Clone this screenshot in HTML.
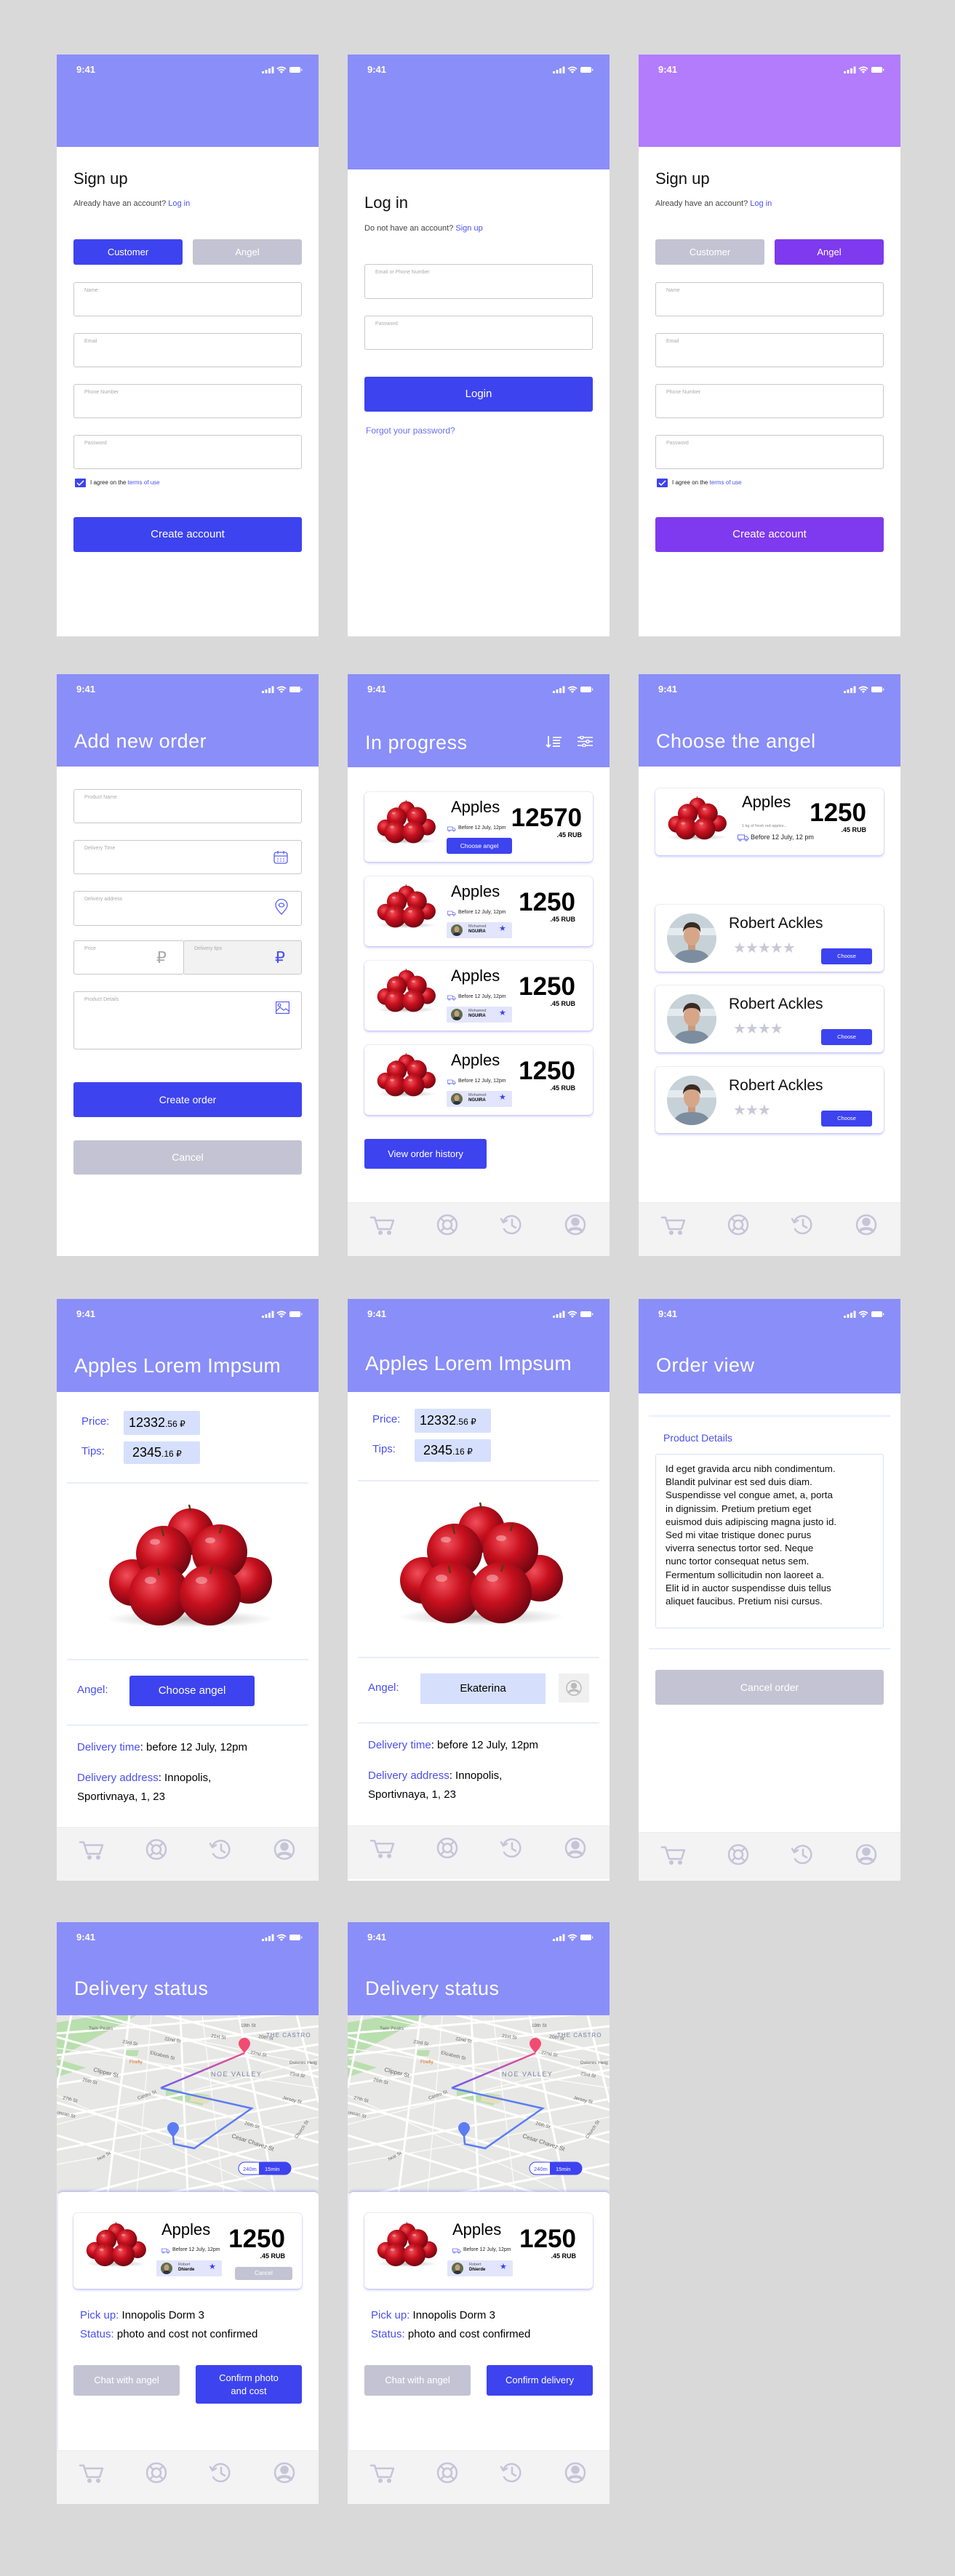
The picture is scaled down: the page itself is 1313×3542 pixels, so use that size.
<!DOCTYPE html>
<html><head><meta charset="utf-8">
<style>
*{margin:0;padding:0;box-sizing:border-box}
body{width:1313px;height:3542px;background:#d9d9d9;position:relative;font-family:"Liberation Sans",sans-serif;overflow:hidden}
.ph{position:absolute;width:360px;height:800px;background:#fff;overflow:hidden}
.hd{position:absolute;left:0;top:0;width:360px;background:#8a8ef8}
.a{position:absolute;white-space:nowrap}
.tm{position:absolute;left:27px;top:13px;color:#fff;font-weight:bold;font-size:13px}
.si{position:absolute;left:282px;top:15px}
.ttl{position:absolute;left:24px;top:77px;color:#fff;font-size:27px;letter-spacing:.5px;white-space:nowrap}
.inp{position:absolute;left:23px;width:314px;height:47px;border:1px solid #c9c9c9;border-radius:3px}
.inp span{position:absolute;left:14px;top:7px;font-size:7px;color:#aaa}
.btn{position:absolute;border-radius:3px;color:#fff;text-align:center;white-space:nowrap}
.pr{background:#3d43ef}.gr{background:#c4c3d3}.pu{background:#7f39ee}
.tb{position:absolute;left:0;top:726px;width:360px;height:74px;background:#f3f3f4;border-top:1px solid #ececec}
.card{position:absolute;left:23px;width:314px;background:#fff;border-radius:6px;box-shadow:0 2px 3px rgba(110,110,240,.35),0 0 0 1px #eeeffc}
.num{position:absolute;font-family:"Liberation Sans Narrow","Liberation Sans",sans-serif;font-weight:bold;color:#000;text-align:right;white-space:nowrap;line-height:1}
.bl{color:#4b4ff0}
.chip{position:absolute;background:#e2e5fb;border-radius:2px}
.dv{position:absolute;left:14px;width:332px;height:2px;background:#e8edfc}
</style></head><body>

<svg width="0" height="0" style="position:absolute">
<defs>
<radialGradient id="ag" cx="0.38" cy="0.35" r="0.7">
<stop offset="0" stop-color="#f0505a"/><stop offset="0.45" stop-color="#c8101e"/><stop offset="1" stop-color="#6a0510"/></radialGradient>
<radialGradient id="sh" cx="0.5" cy="0.5" r="0.5"><stop offset="0" stop-color="#000" stop-opacity=".25"/><stop offset="1" stop-color="#000" stop-opacity="0"/></radialGradient>
<symbol id="ap" viewBox="0 0 240 170">
<ellipse cx="125" cy="158" rx="115" ry="12" fill="url(#sh)"/>
<circle cx="125" cy="38" r="32" fill="url(#ag)"/>
<circle cx="45" cy="108" r="32" fill="url(#ag)"/>
<circle cx="205" cy="105" r="32" fill="url(#ag)"/>
<circle cx="88" cy="68" r="38" fill="url(#ag)"/>
<circle cx="165" cy="66" r="38" fill="url(#ag)"/>
<circle cx="82" cy="125" r="42" fill="url(#ag)"/>
<circle cx="152" cy="125" r="42" fill="url(#ag)"/>
<g stroke="#5a3a10" stroke-width="2.5" fill="none"><path d="M88 44l-3-12M165 40l3-10M82 98l-2-10M152 96l3-10M125 10l-2-9"/></g>
<g fill="#fff" opacity=".35"><ellipse cx="70" cy="105" rx="8" ry="5"/><ellipse cx="140" cy="105" rx="8" ry="5"/><ellipse cx="76" cy="52" rx="7" ry="4"/><ellipse cx="152" cy="50" rx="7" ry="4"/></g>
</symbol>
<symbol id="fc" viewBox="0 0 68 68">
<rect width="68" height="68" fill="#c7d2d8"/><rect x="0" y="20" width="68" height="10" fill="#e4ebee"/>
<path d="M8 68c2-14 12-18 26-18s24 4 26 18z" fill="#7d8da0"/>
<rect x="29" y="38" width="10" height="12" fill="#c99a7c"/>
<ellipse cx="34" cy="30" rx="11" ry="14" fill="#d6a688"/>
<path d="M22 26c0-10 6-14 12-14s13 3 12 14c-2-5-6-7-12-7s-10 2-12 7z" fill="#3a2b22"/>
</symbol>
<symbol id="sm" viewBox="0 0 16 16"><rect width="16" height="16" fill="#5b6e4a"/><ellipse cx="8" cy="7" rx="3.5" ry="4.5" fill="#c99a7c"/><path d="M2 16c1-4 3-5 6-5s5 1 6 5z" fill="#2a3340"/></symbol>
<symbol id="st" viewBox="0 0 56 12"><g fill="#fff"><rect x="0" y="8" width="3" height="3" rx=".5"/><rect x="4.5" y="6" width="3" height="5" rx=".5"/><rect x="9" y="4" width="3" height="7" rx=".5"/><rect x="13.5" y="1.5" width="3" height="9.5" rx=".5"/>
<path d="M27 11l-2.2-2.4a3.2 3.2 0 0 1 4.4 0z"/><path d="M22.6 6.4a6.4 6.4 0 0 1 8.8 0l-1.3 1.3a4.5 4.5 0 0 0-6.2 0z"/><path d="M20.4 4.2a9.5 9.5 0 0 1 13.2 0l-1.3 1.3a7.6 7.6 0 0 0-10.6 0z"/>
<rect x="38" y="2" width="15" height="8" rx="2"/><rect x="54" y="4.5" width="1.3" height="3" rx=".5"/></g></symbol>
<symbol id="tk" viewBox="0 0 16 10"><g fill="none" stroke="#6b6ff5" stroke-width="1"><rect x=".5" y="1" width="9" height="6"/><path d="M9.5 3h3l2.5 2.5V7h-5.5"/><circle cx="3.5" cy="8" r="1.3" fill="#fff"/><circle cx="12" cy="8" r="1.3" fill="#fff"/></g></symbol>
<symbol id="tab" viewBox="0 0 360 74"><g fill="none" stroke="#c6c4d8" stroke-width="2.5" stroke-linecap="round" stroke-linejoin="round">
<path d="M32 20h5l5 16h17l4-12H40"/><circle cx="45" cy="41" r="1.8" fill="#c6c4d8"/><circle cx="57" cy="41" r="1.8" fill="#c6c4d8"/>
<circle cx="137" cy="30" r="13"/><circle cx="137" cy="30" r="6"/><path d="M128 21l5 5M146 21l-5 5M128 39l5-5M146 39l-5-5"/>
<path d="M214 26a12 12 0 1 1 1 10"/><path d="M211 22l3 5 5-3"/><path d="M226 23v8l5 3"/>
<circle cx="313" cy="30" r="13"/><circle cx="313" cy="26" r="4.5" fill="#c6c4d8"/><path d="M304 39c3-5 15-5 18 0" stroke-width="4"/></g></symbol>
</defs></svg>

<!-- ============ ROW 1 ============ -->
<!-- Sign up customer -->
<div class="ph" style="left:78px;top:75px">
<div class="hd" style="height:127px"></div>
<div class="tm">9:41</div><svg class="si" width="56" height="12"><use href="#st"/></svg>
<div class="a" style="left:23px;top:158px;font-size:22px;color:#111">Sign up</div>
<div class="a" style="left:23px;top:199px;font-size:11px;color:#444">Already have an account? <span class="bl">Log in</span></div>
<div class="btn pr" style="left:23px;top:254px;width:150px;height:35px;line-height:35px;font-size:13px">Customer</div>
<div class="btn gr" style="left:187px;top:254px;width:150px;height:35px;line-height:35px;font-size:13px">Angel</div>
<div class="inp" style="top:313px"><span>Name</span></div>
<div class="inp" style="top:383px"><span>Email</span></div>
<div class="inp" style="top:453px"><span>Phone Number</span></div>
<div class="inp" style="top:523px"><span>Password</span></div>
<svg class="a" style="left:25px;top:583px" width="15" height="12"><rect width="15" height="12" rx="1" fill="#3d43ef"/><path d="M3 6l3 3 6-6" stroke="#fff" stroke-width="1.5" fill="none"/></svg>
<div class="a" style="left:46px;top:584px;font-size:8px;color:#222">I agree on the <span class="bl">terms of use</span></div>
<div class="btn pr" style="left:23px;top:636px;width:314px;height:48px;line-height:48px;font-size:15px">Create account</div>
</div>

<!-- Log in -->
<div class="ph" style="left:478px;top:75px">
<div class="hd" style="height:158px"></div>
<div class="tm">9:41</div><svg class="si" width="56" height="12"><use href="#st"/></svg>
<div class="a" style="left:23px;top:191px;font-size:22px;color:#111">Log in</div>
<div class="a" style="left:23px;top:233px;font-size:11px;color:#444">Do not have an account? <span class="bl">Sign up</span></div>
<div class="inp" style="top:288px;height:48px"><span>Email or Phone Number</span></div>
<div class="inp" style="top:359px;height:47px"><span>Password</span></div>
<div class="btn pr" style="left:23px;top:443px;width:314px;height:48px;line-height:48px;font-size:15px">Login</div>
<div class="a" style="left:25px;top:510px;font-size:12px;color:#6b6ff5">Forgot your password?</div>
</div>

<!-- Sign up angel -->
<div class="ph" style="left:878px;top:75px">
<div class="hd" style="height:127px;background:#b27cfd"></div>
<div class="tm">9:41</div><svg class="si" width="56" height="12"><use href="#st"/></svg>
<div class="a" style="left:23px;top:158px;font-size:22px;color:#111">Sign up</div>
<div class="a" style="left:23px;top:199px;font-size:11px;color:#444">Already have an account? <span class="bl">Log in</span></div>
<div class="btn gr" style="left:23px;top:254px;width:150px;height:35px;line-height:35px;font-size:13px">Customer</div>
<div class="btn pu" style="left:187px;top:254px;width:150px;height:35px;line-height:35px;font-size:13px">Angel</div>
<div class="inp" style="top:313px"><span>Name</span></div>
<div class="inp" style="top:383px"><span>Email</span></div>
<div class="inp" style="top:453px"><span>Phone Number</span></div>
<div class="inp" style="top:523px"><span>Password</span></div>
<svg class="a" style="left:25px;top:583px" width="15" height="12"><rect width="15" height="12" rx="1" fill="#3d43ef"/><path d="M3 6l3 3 6-6" stroke="#fff" stroke-width="1.5" fill="none"/></svg>
<div class="a" style="left:46px;top:584px;font-size:8px;color:#222">I agree on the <span class="bl">terms of use</span></div>
<div class="btn pu" style="left:23px;top:636px;width:314px;height:48px;line-height:48px;font-size:15px">Create account</div>
</div>

<!-- ============ ROW 2 ============ -->
<!-- Add new order -->
<div class="ph" style="left:78px;top:927px">
<div class="hd" style="height:127px"></div>
<div class="tm">9:41</div><svg class="si" width="56" height="12"><use href="#st"/></svg>
<div class="ttl">Add new order</div>
<div class="inp" style="top:158px"><span>Product Name</span></div>
<div class="inp" style="top:228px"><span>Delivery Time</span>
<svg class="a" style="left:274px;top:13px" width="20" height="20"><g fill="none" stroke="#5a5ef2" stroke-width="1.3"><rect x="1" y="3" width="18" height="15" rx="3"/><path d="M1 8h18M6 1v4M14 1v4"/><path d="M5 12h2M9 12h2M13 12h2M5 15h2M9 15h2M13 15h2" stroke-width="1"/></g></svg></div>
<div class="inp" style="top:298px;height:48px"><span>Delivery address</span>
<svg class="a" style="left:276px;top:10px" width="18" height="22"><g fill="none" stroke="#5a5ef2" stroke-width="1.3"><path d="M9 21C4 16 1 12 1 8.5a8 8 0 0 1 16 0C17 12 14 16 9 21z"/><ellipse cx="9" cy="8.5" rx="3.5" ry="2.5"/></g></svg></div>
<div class="inp" style="top:366px;width:152px"><span>Price</span><div class="a" style="left:113px;top:10px;font-size:22px;color:#aaa">₽</div></div>
<div class="inp" style="top:366px;left:174px;width:163px;background:#f2f2f2"><span>Delivery tips</span><div class="a" style="left:125px;top:10px;font-size:22px;color:#4b4ff0">₽</div></div>
<div class="inp" style="top:436px;height:80px"><span>Product Details</span>
<svg class="a" style="left:277px;top:13px" width="19" height="17"><g fill="none" stroke="#5a5ef2" stroke-width="1.2"><rect x=".6" y=".6" width="17.8" height="15.8"/><circle cx="5" cy="5" r="1.8"/><path d="M1 13l5-5 5 4 3-2 5 4"/></g></svg></div>
<div class="btn pr" style="left:23px;top:561px;width:314px;height:48px;line-height:48px;font-size:14px">Create order</div>
<div class="btn gr" style="left:23px;top:641px;width:314px;height:47px;line-height:47px;font-size:14px">Cancel</div>
</div>

<!-- In progress -->
<div class="ph" style="left:478px;top:927px">
<div class="hd" style="height:128px"></div>
<div class="tm">9:41</div><svg class="si" width="56" height="12"><use href="#st"/></svg>
<div class="ttl" style="top:79px">In progress</div>
<svg class="a" style="left:272px;top:84px" width="24" height="18"><g stroke="#fff" stroke-width="1.8" fill="none"><path d="M4 1v15M1 13l3 3 3-3M10 3h12M10 7h10M10 11h10M10 15h10"/></g></svg>
<svg class="a" style="left:315px;top:85px" width="23" height="15"><g stroke="#fff" stroke-width="1.6" fill="none"><path d="M1 2h21M1 7.5h21M1 13h21"/><circle cx="7" cy="2" r="2" fill="#8a8ef8"/><circle cx="15" cy="7.5" r="2" fill="#8a8ef8"/><circle cx="10" cy="13" r="2" fill="#8a8ef8"/></g></svg>

<div class="card" style="top:162px;height:96px">
<svg class="a" style="left:13px;top:10px" width="86" height="62"><use href="#ap"/></svg>
<div class="a" style="left:119px;top:8px;font-size:22px">Apples</div>
<svg class="a" style="left:114px;top:47px" width="12" height="8"><use href="#tk"/></svg>
<div class="a" style="left:129px;top:46px;font-size:7px;color:#222">Before 12 July, 12pm</div>
<div class="btn pr" style="left:113px;top:63px;width:90px;height:22px;line-height:22px;font-size:8.5px">Choose angel</div>
<div class="num" style="right:15px;top:18px;font-size:35px">12570</div>
<div class="num" style="right:15px;top:55px;font-size:9px">.45 RUB</div>
</div>

<div class="card" style="top:278px;height:96px">
<svg class="a" style="left:13px;top:10px" width="86" height="62"><use href="#ap"/></svg>
<div class="a" style="left:119px;top:8px;font-size:22px">Apples</div>
<svg class="a" style="left:114px;top:47px" width="12" height="8"><use href="#tk"/></svg>
<div class="a" style="left:129px;top:46px;font-size:7px;color:#222">Before 12 July, 12pm</div>
<div class="chip" style="left:113px;top:63px;width:90px;height:22px"><svg class="a" style="left:6px;top:3px;border-radius:50%" width="16" height="16"><use href="#sm"/></svg><div class="a" style="left:30px;top:3px;font-size:5.5px;color:#555">Mohamed</div><div class="a" style="left:30px;top:10px;font-size:6px;font-weight:bold">NGUIRA</div><div class="a" style="left:72px;top:2px;font-size:11px;color:#3d43ef">★</div></div>
<div class="num" style="right:24px;top:18px;font-size:35px">1250</div>
<div class="num" style="right:24px;top:55px;font-size:9px">.45 RUB</div>
</div>

<div class="card" style="top:394px;height:96px">
<svg class="a" style="left:13px;top:10px" width="86" height="62"><use href="#ap"/></svg>
<div class="a" style="left:119px;top:8px;font-size:22px">Apples</div>
<svg class="a" style="left:114px;top:47px" width="12" height="8"><use href="#tk"/></svg>
<div class="a" style="left:129px;top:46px;font-size:7px;color:#222">Before 12 July, 12pm</div>
<div class="chip" style="left:113px;top:63px;width:90px;height:22px"><svg class="a" style="left:6px;top:3px;border-radius:50%" width="16" height="16"><use href="#sm"/></svg><div class="a" style="left:30px;top:3px;font-size:5.5px;color:#555">Mohamed</div><div class="a" style="left:30px;top:10px;font-size:6px;font-weight:bold">NGUIRA</div><div class="a" style="left:72px;top:2px;font-size:11px;color:#3d43ef">★</div></div>
<div class="num" style="right:24px;top:18px;font-size:35px">1250</div>
<div class="num" style="right:24px;top:55px;font-size:9px">.45 RUB</div>
</div>

<div class="card" style="top:510px;height:96px">
<svg class="a" style="left:13px;top:10px" width="86" height="62"><use href="#ap"/></svg>
<div class="a" style="left:119px;top:8px;font-size:22px">Apples</div>
<svg class="a" style="left:114px;top:47px" width="12" height="8"><use href="#tk"/></svg>
<div class="a" style="left:129px;top:46px;font-size:7px;color:#222">Before 12 July, 12pm</div>
<div class="chip" style="left:113px;top:63px;width:90px;height:22px"><svg class="a" style="left:6px;top:3px;border-radius:50%" width="16" height="16"><use href="#sm"/></svg><div class="a" style="left:30px;top:3px;font-size:5.5px;color:#555">Mohamed</div><div class="a" style="left:30px;top:10px;font-size:6px;font-weight:bold">NGUIRA</div><div class="a" style="left:72px;top:2px;font-size:11px;color:#3d43ef">★</div></div>
<div class="num" style="right:24px;top:18px;font-size:35px">1250</div>
<div class="num" style="right:24px;top:55px;font-size:9px">.45 RUB</div>
</div>

<div class="btn pr" style="left:23px;top:639px;width:168px;height:41px;line-height:41px;font-size:13px">View order history</div>
<div class="tb"><svg width="360" height="74"><use href="#tab"/></svg></div>
</div>

<!-- Choose the angel -->
<div class="ph" style="left:878px;top:927px">
<div class="hd" style="height:127px"></div>
<div class="tm">9:41</div><svg class="si" width="56" height="12"><use href="#st"/></svg>
<div class="ttl">Choose the angel</div>
<div class="card" style="top:157px;height:92px">
<svg class="a" style="left:13px;top:10px" width="86" height="62"><use href="#ap"/></svg>
<div class="a" style="left:119px;top:6px;font-size:22px">Apples</div>
<div class="a" style="left:119px;top:49px;font-size:5.5px;color:#888">1 kg of fresh red apples...</div>
<svg class="a" style="left:113px;top:63px" width="16" height="10"><use href="#tk"/></svg>
<div class="a" style="left:131px;top:62px;font-size:9px;color:#222">Before 12 July, 12 pm</div>
<div class="num" style="right:24px;top:16px;font-size:35px">1250</div>
<div class="num" style="right:24px;top:53px;font-size:9px">.45 RUB</div>
</div>

<div class="card" style="top:317px;height:92px">
<svg class="a" style="left:16px;top:12px;border-radius:50%" width="68" height="68"><use href="#fc"/></svg>
<div class="a" style="left:101px;top:14px;font-size:21px;color:#111">Robert Ackles</div>
<div class="a" style="left:107px;top:47px;font-size:20px;color:#c9c8d8;letter-spacing:-1px">★★★★★</div>
<div class="btn pr" style="left:228px;top:60px;width:70px;height:22px;line-height:22px;font-size:7.5px">Choose</div>
</div>
<div class="card" style="top:428px;height:92px">
<svg class="a" style="left:16px;top:12px;border-radius:50%" width="68" height="68"><use href="#fc"/></svg>
<div class="a" style="left:101px;top:14px;font-size:21px;color:#111">Robert Ackles</div>
<div class="a" style="left:107px;top:47px;font-size:20px;color:#c9c8d8;letter-spacing:-1px">★★★★</div>
<div class="btn pr" style="left:228px;top:60px;width:70px;height:22px;line-height:22px;font-size:7.5px">Choose</div>
</div>
<div class="card" style="top:540px;height:91px">
<svg class="a" style="left:16px;top:12px;border-radius:50%" width="68" height="68"><use href="#fc"/></svg>
<div class="a" style="left:101px;top:14px;font-size:21px;color:#111">Robert Ackles</div>
<div class="a" style="left:107px;top:47px;font-size:20px;color:#c9c8d8;letter-spacing:-1px">★★★</div>
<div class="btn pr" style="left:228px;top:60px;width:70px;height:22px;line-height:22px;font-size:7.5px">Choose</div>
</div>
<div class="tb"><svg width="360" height="74"><use href="#tab"/></svg></div>
</div>

<!-- ============ ROW 3 ============ -->
<div class="ph" style="left:78px;top:1786px">
<div class="hd" style="height:128px"></div>
<div class="tm">9:41</div><svg class="si" width="56" height="12"><use href="#st"/></svg>
<div class="ttl" style="top:76px;font-size:28px;letter-spacing:.2px">Apples Lorem Impsum</div>
<div class="a bl" style="left:34px;top:160px;font-size:15px">Price:</div>
<div class="a" style="left:92px;top:154px;width:105px;height:33px;background:#d6e0fd;border-radius:2px;padding:6px 0 0 7px;font-size:18px">12332<span style="font-size:12px">.56 ₽</span></div>
<div class="a bl" style="left:34px;top:201px;font-size:15px">Tips:</div>
<div class="a" style="left:92px;top:196px;width:105px;height:31px;background:#d6e0fd;border-radius:2px;padding:5px 0 0 12px;font-size:18px">2345<span style="font-size:12px">.16 ₽</span></div>
<div class="dv" style="top:252px"></div>
<svg class="a" style="left:59px;top:281px" width="240" height="172"><use href="#ap"/></svg>
<div class="dv" style="top:495px"></div>
<div class="a bl" style="left:28px;top:529px;font-size:15px">Angel:</div>
<div class="btn pr" style="left:100px;top:518px;width:172px;height:42px;line-height:42px;font-size:15px">Choose angel</div>
<div class="dv" style="top:585px"></div>
<div class="a" style="left:28px;top:608px;font-size:15px"><span class="bl">Delivery time</span>: before 12 July, 12pm</div>
<div class="a" style="left:28px;top:646px;font-size:15px;line-height:26px"><span class="bl">Delivery address</span>: Innopolis,<br>Sportivnaya, 1, 23</div>
<div class="tb"><svg width="360" height="74"><use href="#tab"/></svg></div>
</div>

<div class="ph" style="left:478px;top:1786px">
<div class="hd" style="height:128px"></div>
<div class="tm">9:41</div><svg class="si" width="56" height="12"><use href="#st"/></svg>
<div class="ttl" style="top:73px;font-size:28px;letter-spacing:.2px">Apples Lorem Impsum</div>
<div class="a bl" style="left:34px;top:157px;font-size:15px">Price:</div>
<div class="a" style="left:92px;top:151px;width:105px;height:33px;background:#d6e0fd;border-radius:2px;padding:6px 0 0 7px;font-size:18px">12332<span style="font-size:12px">.56 ₽</span></div>
<div class="a bl" style="left:34px;top:198px;font-size:15px">Tips:</div>
<div class="a" style="left:92px;top:193px;width:105px;height:31px;background:#d6e0fd;border-radius:2px;padding:5px 0 0 12px;font-size:18px">2345<span style="font-size:12px">.16 ₽</span></div>
<div class="dv" style="top:249px"></div>
<svg class="a" style="left:59px;top:278px" width="240" height="172"><use href="#ap"/></svg>
<div class="dv" style="top:492px"></div>
<div class="a bl" style="left:28px;top:526px;font-size:15px">Angel:</div>
<div class="a" style="left:100px;top:515px;width:172px;height:42px;line-height:42px;font-size:15px;background:#d6e0fd;text-align:center">Ekaterina</div>
<div class="a" style="left:290px;top:515px;width:42px;height:40px;background:#f0f0f0"><svg width="42" height="40"><g fill="none" stroke="#bbb" stroke-width="1.5"><circle cx="21" cy="20" r="10"/><circle cx="21" cy="17" r="3.5" fill="#bbb"/><path d="M14 26c3-4 11-4 14 0" stroke-width="3"/></g></svg></div>
<div class="dv" style="top:582px"></div>
<div class="a" style="left:28px;top:605px;font-size:15px"><span class="bl">Delivery time</span>: before 12 July, 12pm</div>
<div class="a" style="left:28px;top:643px;font-size:15px;line-height:26px"><span class="bl">Delivery address</span>: Innopolis,<br>Sportivnaya, 1, 23</div>
<div class="tb" style="top:724px"><svg width="360" height="74"><use href="#tab"/></svg></div>
</div>

<div class="ph" style="left:878px;top:1786px">
<div class="hd" style="height:130px"></div>
<div class="tm">9:41</div><svg class="si" width="56" height="12"><use href="#st"/></svg>
<div class="ttl" style="top:76px">Order view</div>
<div class="dv" style="top:160px"></div>
<div class="a bl" style="left:34px;top:183px;font-size:14px">Product Details</div>
<div class="a" style="left:23px;top:213px;width:314px;height:240px;border:1px solid #d6e0fd;border-radius:3px;padding:11px 0 0 13px;font-size:13.3px;line-height:18.2px;color:#111;white-space:normal">Id eget gravida arcu nibh condimentum.<br>Blandit pulvinar est sed duis diam.<br>Suspendisse vel congue amet, a, porta<br>in dignissim. Pretium pretium eget<br>euismod duis adipiscing magna justo id.<br>Sed mi vitae tristique donec purus<br>viverra senectus tortor sed. Neque<br>nunc tortor consequat netus sem.<br>Fermentum sollicitudin non laoreet a.<br>Elit id in auctor suspendisse duis tellus<br>aliquet faucibus. Pretium nisi cursus.</div>
<div class="dv" style="top:480px"></div>
<div class="btn gr" style="left:23px;top:510px;width:314px;height:48px;line-height:48px;font-size:14px">Cancel order</div>
<div class="tb" style="top:733px"><svg width="360" height="74"><use href="#tab"/></svg></div>
</div>

<!-- ============ ROW 4 ============ -->
<svg width="0" height="0" style="position:absolute"><defs>
<symbol id="map" viewBox="0 0 360 245">
<rect width="360" height="245" fill="#e7e7e5"/>
<path d="M0 10L60 0H110L0 60Z" fill="#b9dfae"/><path d="M0 60L40 72 0 85Z" fill="#b9dfae"/>
<path d="M95 48l18 0-2 8-18 0z" fill="#b9dfae"/><path d="M150 100l60 10-10 14-50-12z" fill="#b9dfae"/><path d="M185 108l30 4-8 10-24-4z" fill="#e5dfbf"/>
<g stroke="#fff" stroke-width="3" fill="none">
<path d="M0 25L360 -5M0 55L360 15M0 95L360 40M0 140L360 75M0 185L360 115M40 245L360 160M150 245L360 205"/>
<path d="M0 30L360 130M0 70L360 175M0 120L360 225M0 165L260 245M60 0L360 85M150 0L360 55"/>
<path d="M100 0L70 245M170 0L180 245M250 0L300 245M330 0L360 120M20 0L0 100"/>
</g>
<g stroke="#fff" stroke-width="1.2" fill="none" opacity=".9">
<path d="M0 45L360 100M0 110L300 245M30 0L360 70M0 150L360 60M0 205L360 140M200 0L230 245M130 0L110 245"/></g>
<g font-family="Liberation Sans,sans-serif" font-size="6.5" fill="#666">
<text x="44" y="20">Twin Peaks</text><text x="90" y="38" transform="rotate(10 90 38)">23rd St</text><text x="148" y="34" transform="rotate(10 148 34)">22nd St</text><text x="212" y="30" transform="rotate(8 212 30)">21st St</text>
<text x="277" y="31" transform="rotate(8 277 31)">20th St</text><text x="253" y="16">19th St</text><text x="128" y="53" transform="rotate(14 128 53)">Elizabeth St</text>
<text x="50" y="77" transform="rotate(14 50 77)" font-size="8">Clipper St</text><text x="35" y="90" transform="rotate(14 35 90)">26th St</text><text x="8" y="115" transform="rotate(14 8 115)">27th St</text><text x="0" y="135" transform="rotate(14 0 135)">uncan St</text>
<text x="112" y="116" transform="rotate(-20 112 116)">Castro St</text><text x="266" y="53" transform="rotate(10 266 53)">22nd St</text><text x="320" y="67">Dolores Heig</text>
<text x="320" y="82" transform="rotate(10 320 82)">23rd St</text><text x="310" y="115" transform="rotate(14 310 115)">Jersey St</text><text x="258" y="150" transform="rotate(16 258 150)">26th St</text>
<text x="240" y="168" transform="rotate(18 240 168)" font-size="8">Cesar Chavez St</text><text x="57" y="200" transform="rotate(-28 57 200)">Noe St</text><text x="330" y="170" transform="rotate(-55 330 170)">Church St</text>
<text x="100" y="66" fill="#e0661a">Firefly</text></g>
<text x="288" y="30" font-family="Liberation Sans,sans-serif" font-size="8" fill="#7a80a8" letter-spacing="1">THE CASTRO</text>
<text x="212" y="84" font-family="Liberation Sans,sans-serif" font-size="9" fill="#7a80a8" letter-spacing="1.5">NOE VALLEY</text>
<defs><linearGradient id="rg" x1="1" y1="0" x2="0" y2="1"><stop offset="0" stop-color="#f24b8c"/><stop offset="1" stop-color="#6b5af0"/></linearGradient></defs>
<path d="M258 52L143 100" stroke="url(#rg)" stroke-width="2.5" fill="none"/>
<path d="M143 100L268 128L189 183L161 177L160 165" stroke="#5b7cf5" stroke-width="2.5" fill="none"/>
<path d="M258 52c-4-5-8-9-8-13a8 8 0 0 1 16 0c0 4-4 8-8 13z" fill="#f24b72"/>
<path d="M160 168c-4-5-8-9-8-13a8 8 0 0 1 16 0c0 4-4 8-8 13z" fill="#5b7cf5"/>
<rect x="250" y="202" width="72" height="17" rx="8.5" fill="#fff" stroke="#3d43ef"/><path d="M278 202h35.5a8.5 8.5 0 0 1 0 17H278z" fill="#3d43ef"/>
<text x="256" y="214" font-family="Liberation Sans,sans-serif" font-size="7.5" fill="#3d43ef">240m</text><text x="286" y="214" font-family="Liberation Sans,sans-serif" font-size="7.5" fill="#fff">15min</text>
</symbol></defs></svg>

<div class="ph" style="left:78px;top:2643px">
<div class="hd" style="height:128px"></div>
<div class="tm">9:41</div><svg class="si" width="56" height="12"><use href="#st"/></svg>
<div class="ttl" style="top:76px">Delivery status</div>
<svg class="a" style="left:0;top:128px" width="360" height="245"><use href="#map"/></svg>
<div class="a" style="left:2px;top:371px;width:358px;height:360px;background:#fff;border-radius:6px 6px 0 0;box-shadow:0 -2px 3px rgba(120,120,240,.4)"></div>
<div class="card" style="top:400px;height:104px">
<svg class="a" style="left:13px;top:10px" width="88" height="66"><use href="#ap"/></svg>
<div class="a" style="left:121px;top:10px;font-size:22px">Apples</div>
<svg class="a" style="left:121px;top:48px" width="12" height="8"><use href="#tk"/></svg>
<div class="a" style="left:136px;top:47px;font-size:7px;color:#222">Before 12 July, 12pm</div>
<div class="chip" style="left:114px;top:65px;width:90px;height:22px"><svg class="a" style="left:6px;top:3px;border-radius:50%" width="16" height="16"><use href="#sm"/></svg><div class="a" style="left:30px;top:3px;font-size:5.5px;color:#555">Robert</div><div class="a" style="left:30px;top:10px;font-size:6px;font-weight:bold">Dhierde</div><div class="a" style="left:72px;top:2px;font-size:11px;color:#3d43ef">★</div></div>
<div class="num" style="right:23px;top:18px;font-size:35px">1250</div>
<div class="num" style="right:23px;top:55px;font-size:9px">.45 RUB</div>
<div class="btn gr" style="left:222px;top:74px;width:79px;height:18px;line-height:18px;font-size:8px">Cancel</div>
</div>
<div class="a" style="left:32px;top:532px;font-size:15px"><span class="bl">Pick up:</span> Innopolis Dorm 3</div>
<div class="a" style="left:32px;top:558px;font-size:15px"><span class="bl">Status:</span> photo and cost not confirmed</div>
<div class="btn gr" style="left:23px;top:609px;width:146px;height:42px;line-height:42px;font-size:13px">Chat with angel</div>
<div class="btn pr" style="left:191px;top:609px;width:146px;height:53px;padding-top:9px;font-size:13px;line-height:18px">Confirm photo<br>and cost</div>
<div class="tb"><svg width="360" height="74"><use href="#tab"/></svg></div>
</div>

<div class="ph" style="left:478px;top:2643px">
<div class="hd" style="height:128px"></div>
<div class="tm">9:41</div><svg class="si" width="56" height="12"><use href="#st"/></svg>
<div class="ttl" style="top:76px">Delivery status</div>
<svg class="a" style="left:0;top:128px" width="360" height="245"><use href="#map"/></svg>
<div class="a" style="left:2px;top:371px;width:358px;height:360px;background:#fff;border-radius:6px 6px 0 0;box-shadow:0 -2px 3px rgba(120,120,240,.4)"></div>
<div class="card" style="top:400px;height:104px">
<svg class="a" style="left:13px;top:10px" width="88" height="66"><use href="#ap"/></svg>
<div class="a" style="left:121px;top:10px;font-size:22px">Apples</div>
<svg class="a" style="left:121px;top:48px" width="12" height="8"><use href="#tk"/></svg>
<div class="a" style="left:136px;top:47px;font-size:7px;color:#222">Before 12 July, 12pm</div>
<div class="chip" style="left:114px;top:65px;width:90px;height:22px"><svg class="a" style="left:6px;top:3px;border-radius:50%" width="16" height="16"><use href="#sm"/></svg><div class="a" style="left:30px;top:3px;font-size:5.5px;color:#555">Robert</div><div class="a" style="left:30px;top:10px;font-size:6px;font-weight:bold">Dhierde</div><div class="a" style="left:72px;top:2px;font-size:11px;color:#3d43ef">★</div></div>
<div class="num" style="right:23px;top:18px;font-size:35px">1250</div>
<div class="num" style="right:23px;top:55px;font-size:9px">.45 RUB</div>
</div>
<div class="a" style="left:32px;top:532px;font-size:15px"><span class="bl">Pick up:</span> Innopolis Dorm 3</div>
<div class="a" style="left:32px;top:558px;font-size:15px"><span class="bl">Status:</span> photo and cost confirmed</div>
<div class="btn gr" style="left:23px;top:609px;width:146px;height:42px;line-height:42px;font-size:13px">Chat with angel</div>
<div class="btn pr" style="left:191px;top:609px;width:146px;height:42px;line-height:42px;font-size:13px">Confirm delivery</div>
<div class="tb"><svg width="360" height="74"><use href="#tab"/></svg></div>
</div>

</body></html>
